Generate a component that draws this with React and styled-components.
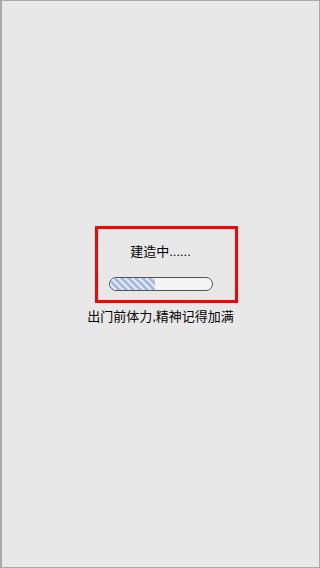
import React from "react";
import styled, { createGlobalStyle } from "styled-components";

const Global = createGlobalStyle`
  html, body { margin: 0; padding: 0; }
  body { font-family: "Liberation Sans", "Noto Sans CJK SC", sans-serif; }
`;

const Screen = styled.div`
  box-sizing: border-box;
  width: 320px;
  height: 568px;
  background: #e8e8e8;
  border: 1px solid #a8a8a8;
  border-left-width: 2px;
  display: flex;
  flex-direction: column;
  align-items: center;
  padding-top: 225px;
  color: #000;
`;

const Frame = styled.div`
  box-sizing: border-box;
  width: 143px;
  height: 77px;
  border: 3px solid #ff0000;
  display: flex;
  flex-direction: column;
  align-items: center;
  padding-top: 15px;
  padding-right: 12px;
  margin-left: 12px;
`;

const Title = styled.div`
  font-size: 13px;
  line-height: 16px;
`;

const Track = styled.div`
  box-sizing: border-box;
  margin-top: 17px;
  width: 104px;
  height: 14px;
  border: 1px solid #555;
  border-radius: 7px;
  background: #f4f4f4;
  overflow: hidden;
  display: flex;
`;

const Fill = styled.div`
  height: 100%;
  background: repeating-linear-gradient(
    45deg,
    #a6bbe0 0px,
    #a6bbe0 3px,
    #e2e9f5 3px,
    #e2e9f5 5px
  );
`;

const Hint = styled.div`
  margin-top: 5px;
  font-size: 13px;
  line-height: 18px;
`;

export default function App() {
  const progress = 0.45;
  return (
    <>
      <Global />
      <Screen>
        <Frame>
          <Title>建造中......</Title>
          <Track>
            <Fill style={{ width: `${progress * 100}%` }} />
          </Track>
        </Frame>
        <Hint>出门前体力,精神记得加满</Hint>
      </Screen>
    </>
  );
}
